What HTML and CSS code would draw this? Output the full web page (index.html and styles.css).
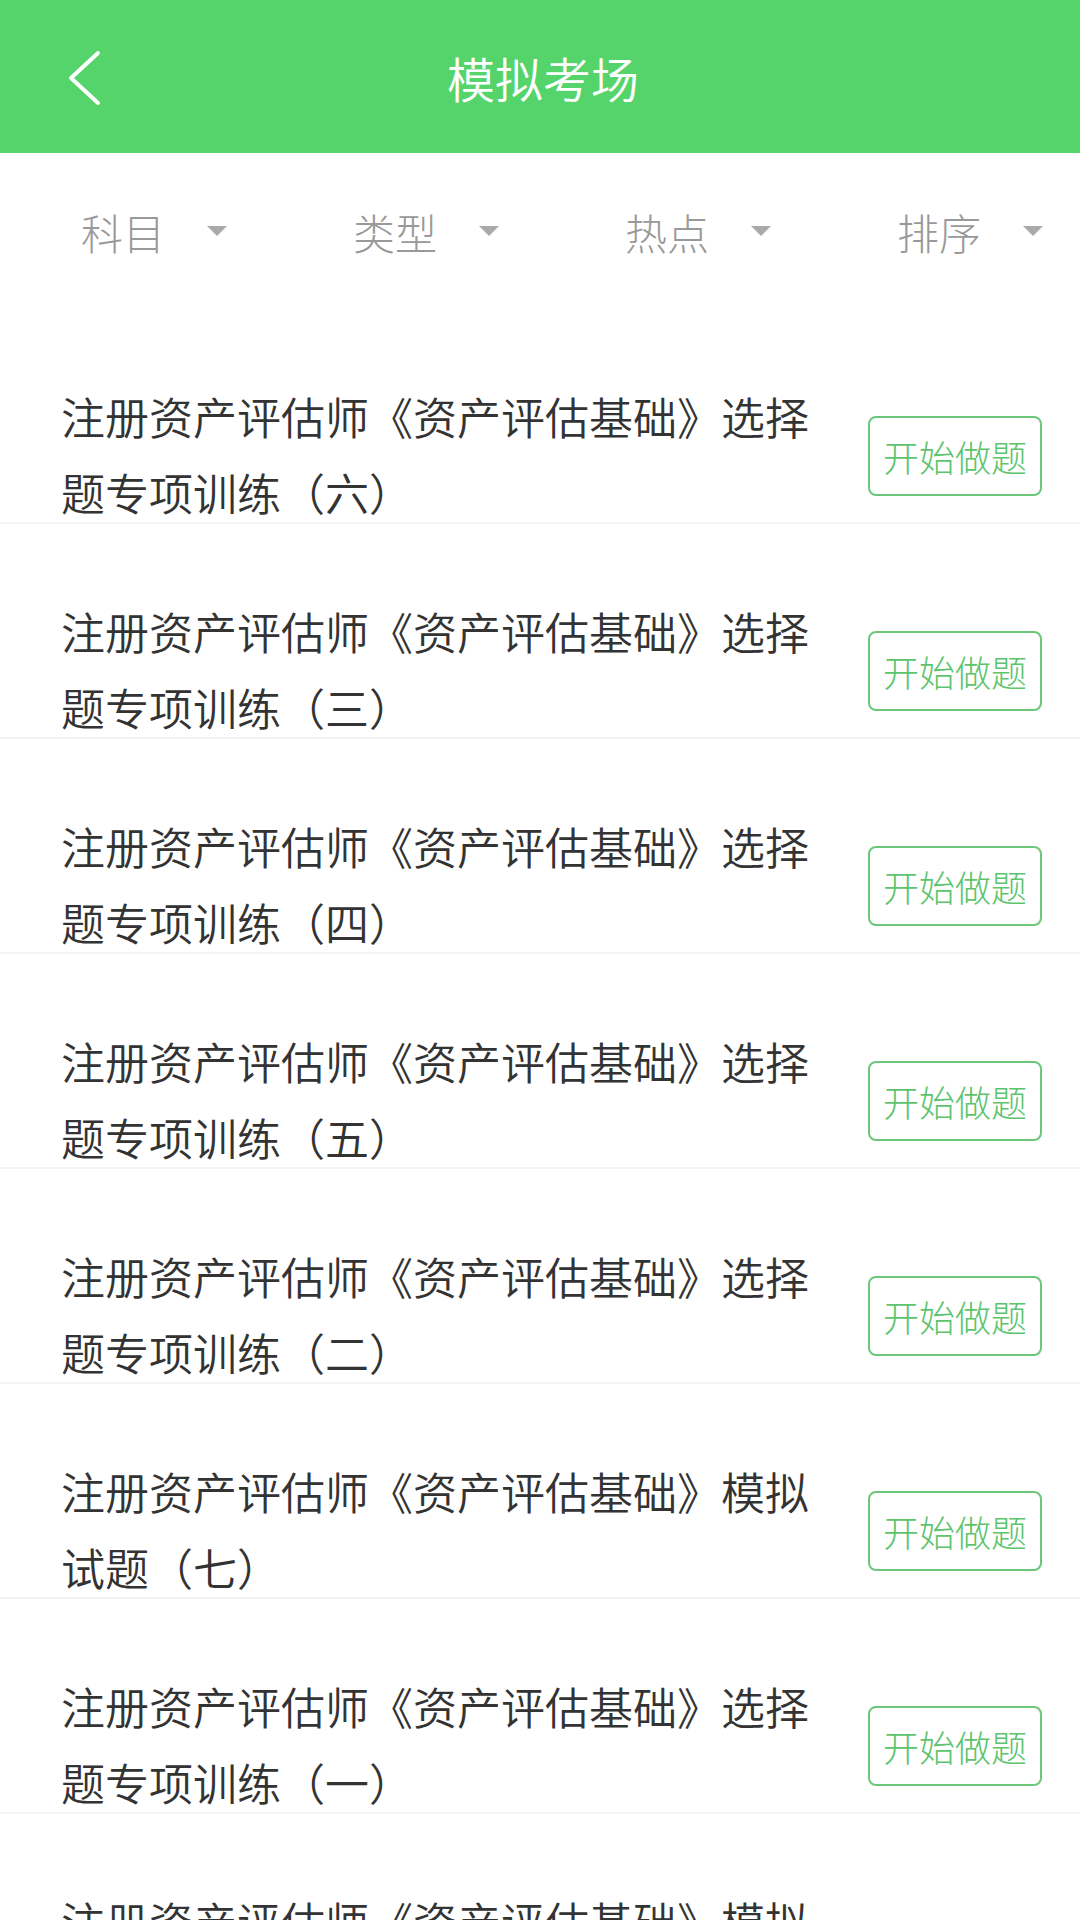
FILE: index.html
```html
<!DOCTYPE html>
<html lang="zh-CN">
<head>
    <meta charset="UTF-8">
    <meta name="viewport" content="width=device-width, initial-scale=1.0">
    <title>模拟考场</title>
    <link rel="stylesheet" href="styles.css">
</head>

<body>
    <header class="topbar">
        <a class="back" href="#">
            <svg width="34" height="56" viewBox="0 0 34 56">
                <polyline points="30,3 3,28 30,53" fill="none" stroke="#ffffff" stroke-width="4" stroke-linecap="round" stroke-linejoin="round"/>
            </svg>
        </a>
        <h1 class="title">模拟考场</h1>
        <span></span>
    </header>

    <nav class="filters">
        <div class="filter"><span>科目</span><i class="caret"></i></div>
        <div class="filter"><span>类型</span><i class="caret"></i></div>
        <div class="filter"><span>热点</span><i class="caret"></i></div>
        <div class="filter"><span>排序</span><i class="caret"></i></div>
    </nav>

    <ul class="exam-list">
        <li class="exam">
            <div class="row">
                <p class="exam-name">注册资产评估师《资产评估基础》选择题专项训练（六）</p>
                <a class="start" href="#">开始做题</a>
            </div>
        </li>
        <li class="exam">
            <div class="row">
                <p class="exam-name">注册资产评估师《资产评估基础》选择题专项训练（三）</p>
                <a class="start" href="#">开始做题</a>
            </div>
        </li>
        <li class="exam">
            <div class="row">
                <p class="exam-name">注册资产评估师《资产评估基础》选择题专项训练（四）</p>
                <a class="start" href="#">开始做题</a>
            </div>
        </li>
        <li class="exam">
            <div class="row">
                <p class="exam-name">注册资产评估师《资产评估基础》选择题专项训练（五）</p>
                <a class="start" href="#">开始做题</a>
            </div>
        </li>
        <li class="exam">
            <div class="row">
                <p class="exam-name">注册资产评估师《资产评估基础》选择题专项训练（二）</p>
                <a class="start" href="#">开始做题</a>
            </div>
        </li>
        <li class="exam">
            <div class="row">
                <p class="exam-name">注册资产评估师《资产评估基础》模拟试题（七）</p>
                <a class="start" href="#">开始做题</a>
            </div>
        </li>
        <li class="exam">
            <div class="row">
                <p class="exam-name">注册资产评估师《资产评估基础》选择题专项训练（一）</p>
                <a class="start" href="#">开始做题</a>
            </div>
        </li>
        <li class="exam">
            <div class="row">
                <p class="exam-name">注册资产评估师《资产评估基础》模拟试题（六）</p>
                <a class="start" href="#">开始做题</a>
            </div>
        </li>
    </ul>
</body>
</html>
```

FILE: styles.css
```css
html, body {
    margin: 0;
    padding: 0;
}

body {
    font-family: "Noto Sans CJK SC", "Noto Sans", sans-serif;
    font-weight: 300;
    background: #ffffff;
    color: #333333;
    width: 1080px;
    height: 1920px;
    overflow: hidden;
}

.topbar {
    height: 153px;
    background-color: #55d46b;
    display: grid;
    grid-template-columns: 1fr auto 1fr;
    align-items: center;
}

.back {
    display: flex;
    align-items: center;
    padding-left: 68px;
    padding-top: 2px;
}

.title {
    margin: 0 0 0 6px;
    font-size: 48px;
    font-weight: 350;
    color: #ffffff;
    line-height: 1;
}

.filters {
    height: 156px;
    box-sizing: border-box;
    padding-left: 81px;
    display: flex;
    align-items: center;
}

.filter {
    width: 272px;
    flex-shrink: 0;
    display: flex;
    align-items: center;
    gap: 42px;
    font-size: 42px;
    color: #999999;
}

.filter:last-child {
    width: auto;
}

.caret {
    width: 0;
    height: 0;
    border-left: 10px solid transparent;
    border-right: 10px solid transparent;
    border-top: 10px solid #aaaaaa;
}

.exam-list {
    list-style: none;
    margin: 0;
    padding: 0;
}

.exam {
    height: 215px;
    box-sizing: border-box;
    padding: 69px 38px 0 61px;
    border-bottom: 2px solid #f3f3f3;
}

.row {
    display: flex;
    align-items: center;
    gap: 37px;
}

.exam-name {
    flex: 1;
    margin: 0;
    font-size: 44px;
    font-weight: 350;
    line-height: 76px;
    color: #333333;
}

.start {
    width: 174px;
    height: 80px;
    box-sizing: border-box;
    flex-shrink: 0;
    margin-top: 4px;
    border: 2px solid #6cc77a;
    border-radius: 8px;
    display: flex;
    align-items: center;
    justify-content: center;
    font-size: 36px;
    color: #5cc46c;
    text-decoration: none;
}
```
